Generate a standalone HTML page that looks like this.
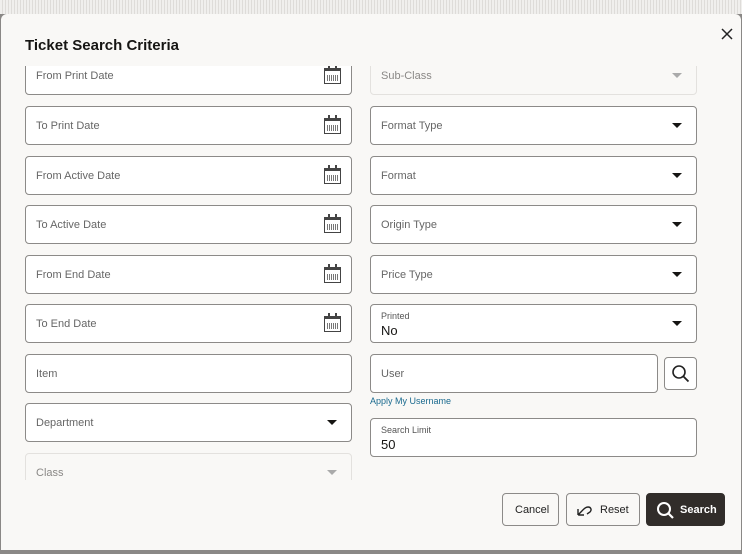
<!DOCTYPE html>
<html><head><style>
*{box-sizing:border-box;margin:0;padding:0}
body{width:742px;height:554px;overflow:hidden;background:#8a8886;font-family:"Liberation Sans",sans-serif;position:relative}
.top{position:absolute;left:0;top:0;width:742px;height:14px;background:repeating-linear-gradient(90deg,#f0efed 0 2px,#dedcd9 2px 3px)}
.dlg{position:absolute;left:1px;top:14px;width:740px;height:536px;background:#f9f8f6;border-radius:6px 6px 0 0}
.title{position:absolute;left:25px;top:37px;font-size:15px;font-weight:bold;color:#161513}
.clip{position:absolute;left:0;top:66px;width:742px;height:414px;overflow:hidden}
.f{position:absolute;width:327px;height:39px;background:#fff;border:1px solid #8c8a88;border-radius:4px;font-size:11px;color:#666}
.f span.l{position:absolute;left:10px;top:13px}
.f.d{background:#f9f8f6;border-color:#e3e1de;color:#8a8886}
.cal{position:absolute;right:10px;top:11px;width:17px;height:16px;border:1.5px solid #444;border-top-width:3px;background:#fff}
.cal b{position:absolute;left:2px;right:2px;top:4px;height:6px;background:repeating-linear-gradient(90deg,#777 0 1px,#fff 1px 2px)}
.cal:before,.cal:after{content:"";position:absolute;top:-6px;width:2px;height:5px;background:#444}
.cal:before{left:3px}.cal:after{right:3px}
.arr{position:absolute;right:14px;top:16px;width:0;height:0;border-left:5px solid transparent;border-right:5px solid transparent;border-top:5px solid #161513}
.d .arr{border-top-color:#aaa}
.sm{position:absolute;left:10px;top:6px;font-size:9px;color:#555}
.val{position:absolute;left:10px;top:18px;font-size:13px;color:#161513}
.btn{position:absolute;top:493px;height:33px;border:1px solid #8c8a88;border-radius:4px;background:#f9f8f6;font-size:11px;color:#222}
</style></head><body>
<div class="top"></div>
<div class="dlg"></div>
<div class="title">Ticket Search Criteria</div>
<svg width="12" height="12" style="position:absolute;left:721px;top:28px"><path d="M1 1L11 11M11 1L1 11" stroke="#222" stroke-width="1.5"/></svg>
<div class="clip">
<div class="f" style="left:25px;top:-10px"><span class="l">From Print Date</span><i class="cal"><b></b></i></div>
<div class="f" style="left:25px;top:40px"><span class="l">To Print Date</span><i class="cal"><b></b></i></div>
<div class="f" style="left:25px;top:90px"><span class="l">From Active Date</span><i class="cal"><b></b></i></div>
<div class="f" style="left:25px;top:139px"><span class="l">To Active Date</span><i class="cal"><b></b></i></div>
<div class="f" style="left:25px;top:189px"><span class="l">From End Date</span><i class="cal"><b></b></i></div>
<div class="f" style="left:25px;top:238px"><span class="l">To End Date</span><i class="cal"><b></b></i></div>
<div class="f" style="left:25px;top:288px"><span class="l">Item</span></div>
<div class="f" style="left:25px;top:337px"><span class="l">Department</span><i class="arr"></i></div>
<div class="f d" style="left:25px;top:387px"><span class="l">Class</span><i class="arr"></i></div>
<div class="f d" style="left:370px;top:-10px"><span class="l">Sub-Class</span><i class="arr"></i></div>
<div class="f" style="left:370px;top:40px"><span class="l">Format Type</span><i class="arr"></i></div>
<div class="f" style="left:370px;top:90px"><span class="l">Format</span><i class="arr"></i></div>
<div class="f" style="left:370px;top:139px"><span class="l">Origin Type</span><i class="arr"></i></div>
<div class="f" style="left:370px;top:189px"><span class="l">Price Type</span><i class="arr"></i></div>
<div class="f" style="left:370px;top:238px"><span class="sm">Printed</span><span class="val">No</span><i class="arr"></i></div>
<div class="f" style="left:370px;top:288px;width:288px"><span class="l">User</span></div>
<div class="f" style="left:664px;top:291px;width:33px;height:33px;border-radius:4px"><svg width="31" height="31" viewBox="0 0 31 31" style="position:absolute;left:0;top:0"><circle cx="14" cy="14" r="6" fill="none" stroke="#222" stroke-width="1.6"/><path d="M18.5 18.5l5 5" stroke="#222" stroke-width="1.8"/></svg></div>
<div style="position:absolute;left:370px;top:330px;font-size:9px;color:#1a6a8f">Apply My Username</div>
<div class="f" style="left:370px;top:352px"><span class="sm">Search Limit</span><span class="val">50</span></div>
</div>
<div class="btn" style="left:502px;width:57px"><span style="position:absolute;left:12px;top:10px">Cancel</span></div>
<div class="btn" style="left:566px;width:74px"><svg width="20" height="16" style="position:absolute;left:8px;top:8px"><path d="M3 13 L3 7 M3 13 L9 13 M3 13 C8 8 10 5 13 5 C16 5 17 8 15 10 L12 12" fill="none" stroke="#222" stroke-width="1.4"/></svg><span style="position:absolute;left:33px;top:10px">Reset</span></div>
<div class="btn" style="left:646px;width:79px;background:#312d2a;border-color:#312d2a;color:#fff;font-weight:bold"><svg width="22" height="22" style="position:absolute;left:7px;top:5px"><circle cx="10" cy="10" r="6" fill="none" stroke="#fff" stroke-width="2"/><path d="M14.5 14.5l4.5 4.5" stroke="#fff" stroke-width="2.2"/></svg><span style="position:absolute;left:33px;top:10px">Search</span></div>
</body></html>
